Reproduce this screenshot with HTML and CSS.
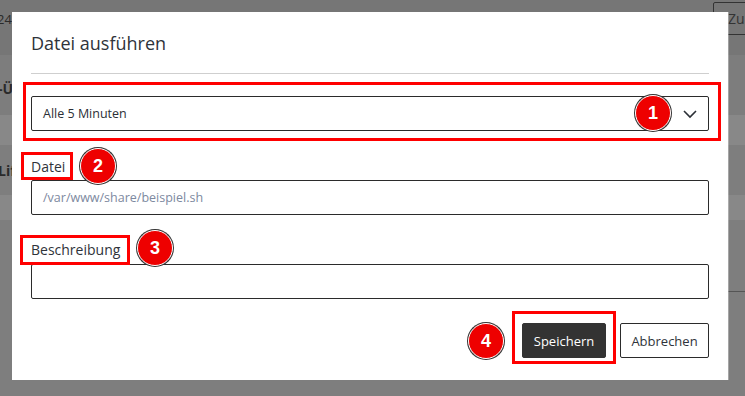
FILE: index.html
```html
<!DOCTYPE html>
<html lang="de">
<head>
<meta charset="utf-8">
<title>Datei ausführen</title>
<link rel="stylesheet" href="styles.css">
</head>
<body>
<div class="page">
  <div class="bg-top">
    <span class="bg-date">24/</span>
    <span class="bg-btn">Zur</span>
  </div>
  <div class="bg-row bg-row1"><span class="bg-bold">-Ü</span></div>
  <div class="bg-row bg-row2"></div>
  <div class="bg-row bg-row3"><span class="bg-bold">Lif</span></div>
  <div class="bg-row bg-row4"></div>
  <div class="bg-row bg-rest"><span class="bg-line"></span></div>
</div>

<div class="modal">
  <h1 class="modal-title">Datei ausführen</h1>
  <div class="select">
    <span class="select-value">Alle 5 Minuten</span>
    <svg class="chevron" width="16" height="10" viewBox="0 0 16 10"><path d="M2 2 L8 8 L14 2" fill="none" stroke="#2b2f36" stroke-width="1.6"/></svg>
  </div>
  <label class="label label-file">Datei</label>
  <div class="input"><span class="placeholder">/var/www/share/beispiel.sh</span></div>
  <label class="label label-desc">Beschreibung</label>
  <div class="input"></div>
  <div class="actions">
    <button class="btn btn-primary">Speichern</button>
    <button class="btn btn-secondary">Abbrechen</button>
  </div>

  <span class="mark mark1"></span>
  <span class="mark mark2"></span>
  <span class="mark mark3"></span>
  <span class="mark mark4"></span>
  <span class="badge badge1">1</span>
  <span class="badge badge2">2</span>
  <span class="badge badge3">3</span>
  <span class="badge badge4">4</span>
</div>
</body>
</html>
```

FILE: styles.css
```css
* { box-sizing: border-box; }
html, body { margin: 0; padding: 0; }
body {
  width: 745px;
  height: 396px;
  overflow: hidden;
  position: relative;
  background: #7e7e7e;
  font-family: "Open Sans", "Noto Sans", sans-serif;
  color: #2b2f36;
}
.page { width: 745px; }
.bg-top {
  height: 55px;
  background: #767676;
  display: flex;
  align-items: flex-start;
  justify-content: space-between;
  padding-top: 2px;
}
.bg-date {
  font-size: 13px;
  color: #2a2a2a;
  margin-left: -3px;
  margin-top: 8px;
}
.bg-btn {
  height: 33px;
  width: 60px;
  margin-right: -28px;
  border: 1px solid #333;
  border-radius: 2px;
  font-size: 14px;
  color: #333;
  padding: 6px 0 0 14px;
}
.bg-row { display: flex; align-items: center; }
.bg-row1 { height: 60px; background: #7d7d7d; padding-top: 6px; }
.bg-row2 { height: 30px; background: #888888; }
.bg-row3 { height: 50px; background: #7e7e7e; }
.bg-row4 { height: 25px; background: #888888; }
.bg-rest { height: 72px; align-items: flex-end; justify-content: flex-end; }
.bg-line { width: 20px; height: 1px; background: #555; }
.bg-bold {
  font-weight: 700;
  font-size: 14px;
  color: #2a2a2a;
  margin-left: -2px;
}

.modal {
  position: absolute;
  left: 12px;
  top: 12px;
  width: 716px;
  height: 368px;
  background: #fff;
  padding: 0 19px 22px;
  display: flex;
  flex-direction: column;
  box-shadow: 1px 0 0 rgba(255,255,255,0.3);
}
.modal-title {
  margin: 17px 0 0;
  font-size: 18px;
  line-height: 28px;
  font-weight: 400;
  color: #2f333a;
  padding-bottom: 16px;
  border-bottom: 1px solid #cfcfcf;
}
.select {
  margin-top: 22px;
  height: 35px;
  border: 1px solid #2b2b2b;
  border-radius: 2px;
  display: flex;
  align-items: center;
  justify-content: space-between;
  padding: 0 10px 0 11px;
}
.select-value { font-size: 12.5px; }
.chevron { display: block; }
.label {
  font-size: 14px;
  line-height: 20px;
  color: #2f333a;
}
.label-file { margin-top: 26px; margin-bottom: 3px; }
.label-desc { margin-top: 25px; margin-bottom: 4px; }
.input {
  height: 35px;
  border: 1px solid #2b2b2b;
  border-radius: 2px;
  display: flex;
  align-items: center;
  padding: 0 11px;
}
.placeholder { font-size: 12.5px; color: #7d89a0; }
.actions {
  margin-top: 24px;
  display: flex;
  justify-content: flex-end;
  gap: 14px;
}
.btn {
  height: 35px;
  font-family: "Open Sans", "Noto Sans", sans-serif;
  font-size: 13px;
  border-radius: 2px;
  padding: 0;
  cursor: pointer;
}
.btn-primary {
  width: 84px;
  background: #333;
  color: #fff;
  border: 1px solid #333;
}
.btn-secondary {
  width: 89px;
  background: #fff;
  color: #2f333a;
  border: 1px solid #2b2b2b;
}

.mark {
  position: absolute;
  border: 3px solid #f00;
  pointer-events: none;
}
.mark1 { left: 11px; top: 70px; width: 698px; height: 59px; }
.mark2 { left: 9px; top: 140px; width: 52px; height: 28px; }
.mark3 { left: 8px; top: 223px; width: 110px; height: 30px; }
.mark4 { left: 500px; top: 299px; width: 104px; height: 53px; }

.badge {
  position: absolute;
  width: 36px;
  height: 36px;
  margin: -18px 0 0 -18px;
  border-radius: 50%;
  background: #ee0000;
  border: 1.5px solid #fff;
  box-shadow: 0 0 0 1px #333;
  color: #fff;
  font-family: "Liberation Sans", Arial, sans-serif;
  font-weight: 700;
  font-size: 18px;
  display: flex;
  align-items: center;
  justify-content: center;
}
.badge1 { left: 641px; top: 101px; }
.badge2 { left: 86px; top: 154px; }
.badge3 { left: 143px; top: 236px; }
.badge4 { left: 474px; top: 329px; }
```
